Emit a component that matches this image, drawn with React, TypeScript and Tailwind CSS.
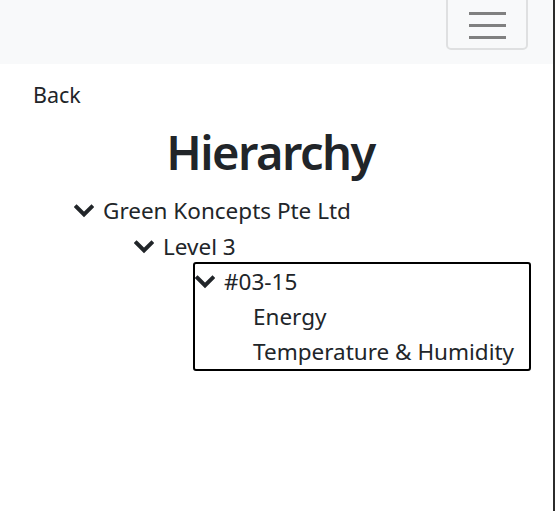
import React from "react";

function Chevron({ className = "" }: { className?: string }) {
  return (
    <svg viewBox="0 0 20 14" className={className} width="20" height="14">
      <path d="M2.5 3 L10 10.5 L17.5 3" fill="none" stroke="#212529" strokeWidth="4" strokeLinecap="square" />
    </svg>
  );
}

export default function App() {
  return (
    <div className="relative min-h-[511px] w-[555px] bg-white text-[#212529]" style={{ fontFamily: '"Noto Sans", "Open Sans", sans-serif' }}>
      <div className="absolute right-0 top-0 h-[511px] w-[2px] bg-[#2b2b2b]" />
      <nav className="flex h-[64px] justify-end bg-[#f8f9fa] pr-[27px]">
        <button className="mt-[-6px] flex h-[56px] w-[82px] flex-col items-center justify-center gap-[9px] rounded-[5px] border-2 border-[#dfe0e1] pt-[6px]">
          <span className="block h-[3px] w-[37px] bg-[#808080]" />
          <span className="block h-[3px] w-[37px] bg-[#808080]" />
          <span className="block h-[3px] w-[37px] bg-[#808080]" />
        </button>
      </nav>
      <div className="pl-[33px] pt-[17px] text-[21.5px] leading-[28px]">Back</div>
      <h1 className="mt-[15px] pr-[14px] text-center text-[47px] font-semibold leading-[56px] tracking-[-1.5px]">Hierarchy</h1>
      <div className="mt-[13px] text-[22.5px] leading-[36px]">
        <div className="flex items-center pl-[74px]">
          <Chevron className="mr-[9px]" />
          <span>Green Koncepts Pte Ltd</span>
        </div>
        <div className="flex items-center pl-[134px]">
          <Chevron className="mr-[9px]" />
          <span>Level 3</span>
        </div>
        <div className="-mt-[3px] ml-[193px] w-[338px] rounded-[3px] border-2 border-black leading-[35px]">
          <div className="flex items-center">
            <Chevron className="mr-[9px]" />
            <span>#03-15</span>
          </div>
          <div className="pl-[58px]">Energy</div>
          <div className="pl-[58px]">Temperature &amp; Humidity</div>
        </div>
      </div>
    </div>
  );
}
